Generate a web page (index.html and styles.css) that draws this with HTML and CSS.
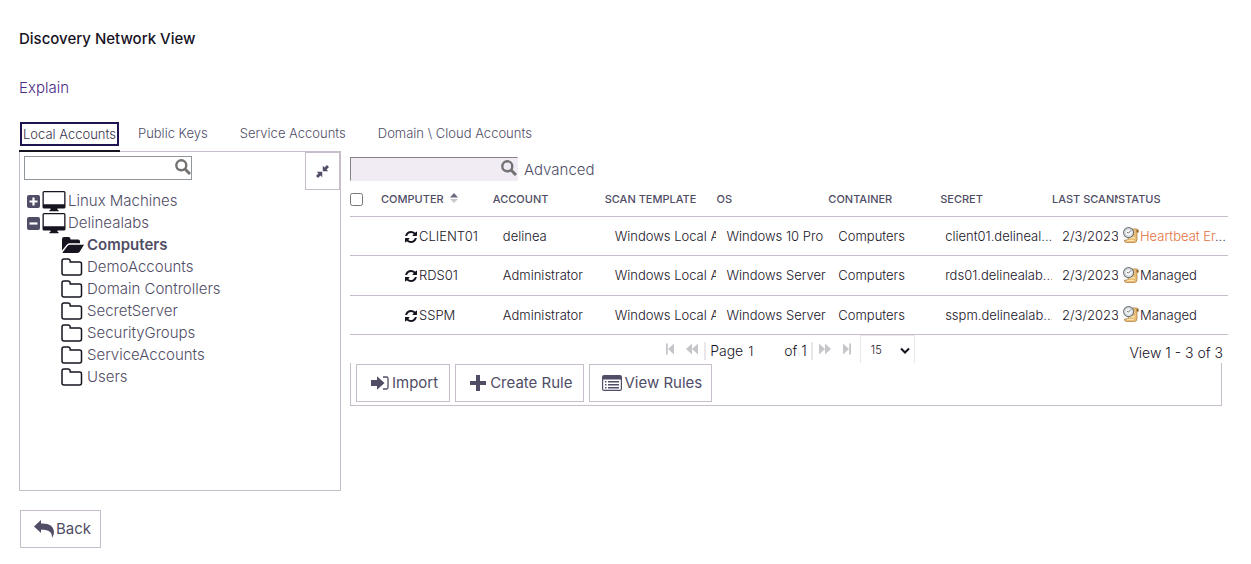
FILE: index.html
```html
<!DOCTYPE html>
<html lang="en">
<head>
<meta charset="utf-8">
<title>Discovery Network View</title>
<link rel="stylesheet" href="styles.css">
</head>
<body>
<svg class="sprite" aria-hidden="true">
  <symbol id="search" viewBox="0 0 16 16"><circle cx="6.3" cy="6.3" r="5" fill="none" stroke="currentColor" stroke-width="2.4"/><path d="M10 10l5 5" stroke="currentColor" stroke-width="3"/></symbol>
  <symbol id="monitor" viewBox="0 0 24 22"><path fill="currentColor" fill-rule="evenodd" d="M2 1h20a1.500 1.500 0 0 1 1.500 1.500v14.500a1.500 1.500 0 0 1-1.500 1.500h-6.500v1.500h1v1.200H7.500V20h1v-1.500H2A1.500 1.500 0 0 1 .5 17V2.500A1.500 1.500 0 0 1 2 1zM1.800 2.300v12h20.400v-12z"/></symbol>
  <symbol id="folder" viewBox="0 0 22 18"><path fill="none" stroke="currentColor" stroke-width="1.500" d="M1 15V3a2 2 0 0 1 2-2h4q2 0 2.200 2v1h9.300a2 2 0 0 1 2 2v9a2 2 0 0 1-2 2H3a2 2 0 0 1-2-2z"/></symbol>
  <symbol id="folder-open" viewBox="0 0 24 18"><path fill="currentColor" d="M1 14.500V3q0-2 2-2h4.500q2 0 2 2v.5h7.500q2 0 2 2v1.700H8.500Q6.800 7.200 5.500 9zM1.500 16.500L6.500 10q1-1.200 2.500-1.200h14L18.500 16q-1 1-2.500 1H3q-1.200 0-1.500-.5z"/></symbol>
  <symbol id="refresh" viewBox="0 0 1536 1536"><path fill="currentColor" d="M1511 928q0 5-1 7-64 268-268 434.500t-478 166.500q-146 0-282.500-55t-243.500-157l-129 129q-19 19-45 19t-45-19-19-45v-448q0-26 19-45t45-19h448q26 0 45 19t19 45-19 45l-137 137q71 66 161 102t187 36q134 0 250-65t186-179q11-17 53-117 8-23 30-23h192q13 0 22.500 9.500t9.500 22.500zm25-800v448q0 26-19 45t-45 19h-448q-26 0-45-19t-19-45 19-45l138-138q-148-137-349-137-134 0-250 65t-186 179q-11 17-53 117-8 23-30 23h-199q-13 0-22.500-9.500t-9.500-22.500v-7q65-268 270-434.500t480-166.500q146 0 284 55.500t245 156.500l130-129q19-19 45-19t45 19 19 45z"/></symbol>
  <symbol id="scroll" viewBox="0 0 16 16"><path fill="#e9bd75" stroke="#a8783a" stroke-width=".7" d="M6 2h7.500q2 0 2 1.800v1.400h-1.500v7.300q0 3-2.500 3H3.200q-2-.2-1.700-2.500H5z"/><path fill="#fbe3ad" d="M6 10h6v1.500H6zM4 13h7v1H4z"/><path fill="#8b5d2a" d="M13.500 3h1.400v2.200h-1.400z"/><circle cx="5.600" cy="5.600" r="5" fill="#f3f6f7" stroke="#707579" stroke-width="1.100"/><circle cx="5.600" cy="5.600" r="3.600" fill="none" stroke="#b8c1c6" stroke-width=".6"/><path d="M8 3.400L5.500 6.100 4 5.300" fill="none" stroke="#555" stroke-width=".8"/></symbol>
  <symbol id="first" viewBox="0 0 10 12"><path fill="currentColor" d="M1 0.500h1.800v11H1zM9 .5v11L3 6z"/></symbol>
  <symbol id="prev" viewBox="0 0 12 12"><path fill="currentColor" d="M6 .5v11L0 6zM12 .5v11L6 6z"/></symbol>
</svg>

<main class="page">
  <h1 class="title">Discovery Network View</h1>
  <a class="explain" href="#">Explain</a>

  <nav class="tabs">
    <a class="tab active" href="#"><span class="focus">Local Accounts</span></a>
    <a class="tab" href="#">Public Keys</a>
    <a class="tab" href="#">Service Accounts</a>
    <a class="tab" href="#">Domain \ Cloud Accounts</a>
  </nav>

  <div class="columns">
    <section class="tree-panel">
      <div class="tree-top">
        <div class="search"><input type="text" aria-label="Search containers"><svg class="lens"><use href="#search"/></svg></div>
        <button class="collapse" type="button" aria-label="Collapse panel"><svg viewBox="0 0 14 14"><path fill="currentColor" d="M7.300 6.700V.9l1.900 1.700L11.800 0 14 2.200l-2.600 2.600 1.700 1.900zM6.700 7.300v5.800l-1.900-1.700L2.200 14 0 11.800l2.600-2.600L.9 7.300z"/></svg></button>
      </div>
      <ul class="tree">
        <li><button class="toggle" type="button" aria-label="Expand"><svg viewBox="0 0 13 13"><path d="M6.500 2.500v8M2.500 6.500h8"/></svg></button><svg class="monitor"><use href="#monitor"/></svg>Linux Machines</li>
        <li><button class="toggle" type="button" aria-label="Collapse"><svg viewBox="0 0 13 13"><path d="M2.500 6.500h8"/></svg></button><svg class="monitor"><use href="#monitor"/></svg>Delinealabs</li>
        <li class="child selected"><svg class="folder open"><use href="#folder-open"/></svg>Computers</li>
        <li class="child"><svg class="folder"><use href="#folder"/></svg>DemoAccounts</li>
        <li class="child"><svg class="folder"><use href="#folder"/></svg>Domain Controllers</li>
        <li class="child"><svg class="folder"><use href="#folder"/></svg>SecretServer</li>
        <li class="child"><svg class="folder"><use href="#folder"/></svg>SecurityGroups</li>
        <li class="child"><svg class="folder"><use href="#folder"/></svg>ServiceAccounts</li>
        <li class="child"><svg class="folder"><use href="#folder"/></svg>Users</li>
      </ul>
    </section>

    <section class="grid">
      <div class="grid-search">
        <div class="search tinted"><input type="text" aria-label="Search accounts"><svg class="lens"><use href="#search"/></svg></div>
        <a class="advanced" href="#">Advanced</a>
      </div>
      <table class="accounts">
        <colgroup><col class="c-check"><col><col><col><col><col><col><col class="c-date"><col class="c-status"></colgroup>
        <thead>
          <tr><th><input type="checkbox" aria-label="Select all"></th><th>COMPUTER<svg class="sort" viewBox="0 0 8 11"><path fill="#6b6880" d="M4 0l4 4.500H0z"/><path fill="#c9c8cf" d="M0 6h8l-4 4z"/></svg></th><th>ACCOUNT</th><th>SCAN TEMPLATE</th><th>OS</th><th>CONTAINER</th><th>SECRET</th><th>LAST SCANN</th><th>STATUS</th></tr>
        </thead>
        <tbody>
          <tr><td></td><td class="host"><svg><use href="#refresh"/></svg>CLIENT01</td><td>delinea</td><td>Windows Local Ac</td><td>Windows 10 Pro</td><td>Computers</td><td class="secret">client01.delineal...</td><td>2/3/2023</td><td class="status"><svg><use href="#scroll"/></svg><span class="error">Heartbeat Er</span>...</td></tr>
          <tr><td></td><td class="host"><svg><use href="#refresh"/></svg>RDS01</td><td>Administrator</td><td>Windows Local Ac</td><td>Windows Server 2</td><td>Computers</td><td class="secret">rds01.delinealab...</td><td>2/3/2023</td><td class="status"><svg><use href="#scroll"/></svg>Managed</td></tr>
          <tr><td></td><td class="host"><svg><use href="#refresh"/></svg>SSPM</td><td>Administrator</td><td>Windows Local Ac</td><td>Windows Server 2</td><td>Computers</td><td class="secret">sspm.delinealab...</td><td>2/3/2023</td><td class="status"><svg><use href="#scroll"/></svg>Managed</td></tr>
        </tbody>
      </table>
      <div class="pager">
        <span></span>
        <div class="pages">
          <button type="button" aria-label="First page"><svg class="narrow"><use href="#first"/></svg></button>
          <button type="button" aria-label="Previous page"><svg><use href="#prev"/></svg></button>
          <label class="page-box">Page <input type="text" value="1"></label>
          <span class="total">of 1</span>
          <button type="button" aria-label="Next page"><svg class="flip"><use href="#prev"/></svg></button>
          <button type="button" aria-label="Last page"><svg class="narrow flip"><use href="#first"/></svg></button>
          <div class="size"><select aria-label="Rows per page"><option>15</option></select><svg viewBox="0 0 10 8"><path d="M1 1.500l4 4 4-4"/></svg></div>
        </div>
        <span class="view">View 1 - 3 of 3</span>
      </div>
      <div class="actions">
        <button class="btn import" type="button"><svg viewBox="0 0 18 14"><path fill="currentColor" d="M0 4h6V.2L13.500 7 6 13.800V10H0z"/><path d="M12 1h3.500q1.500 0 1.500 1.500v9q0 1.500-1.500 1.500H12" fill="none" stroke="currentColor" stroke-width="1.300"/></svg>Import</button>
        <button class="btn create" type="button"><svg viewBox="0 0 16 16"><path d="M8 0v16M0 8h16" stroke="currentColor" stroke-width="4"/></svg>Create Rule</button>
        <button class="btn rules" type="button"><svg viewBox="0 0 20 16"><rect x=".6" y=".6" width="18.800" height="14.800" rx="1.500" fill="none" stroke="currentColor" stroke-width="1.200"/><path fill="currentColor" d="M1 1h18v3.500H1z"/><path d="M3 6.700h1.500M6 6.700h11M3 9.700h1.500M6 9.700h11M3 12.700h1.500M6 12.700h11" stroke="currentColor" stroke-width="1.400"/></svg>View Rules</button>
      </div>
    </section>
  </div>

  <button class="btn back" type="button"><svg viewBox="0 0 20 18"><path fill="currentColor" d="M0 6.500L7 0v3.600c8-.4 12.500 2.400 13 8.400q0 3-2 6c.3-6-3-8.300-11-8.200V13z"/></svg>Back</button>
</main>
</body>
</html>
```
FILE: styles.css
```css
* { box-sizing: border-box; }
body {
  margin: 0;
  background: #fff;
  color: #504d66;
  font: 300 15px/22px Inter, "Open Sans", sans-serif;
}
a { color: inherit; text-decoration: none; }
button, input, select { font: inherit; color: inherit; }
button { background: none; border: 0; padding: 0; }
svg { flex: none; }
.sprite { position: absolute; width: 0; height: 0; }
.page { padding: 28px 23px 16px 19px; }
.title { margin: 0 0 27px; font-size: 15px; line-height: 22px; font-weight: 500; color: #17131f; }
.explain { display: block; width: max-content; color: #4b2a86; }

.tabs { display: flex; gap: 18px; height: 53px; align-items: flex-end; font-size: 13px; }
.tab { height: 32px; padding-top: 2px; }
.tab + .tab + .tab { margin-left: 14px; }
.tab.active { padding: 2px 1px 0; border-bottom: 2px solid #17131f; z-index: 1; }
.focus { display: block; padding: 0 1px; border: 2px solid #1f1450; line-height: 20px; color: #37334a; }

.columns { display: flex; gap: 9px; align-items: flex-start; margin-top: -1px; }
.tree-panel { width: 322px; flex: none; min-height: 340px; border: 1px solid #c8bdcb; }
.tree-top { display: flex; justify-content: space-between; align-items: flex-start; padding-left: 4px; }
.search { position: relative; width: 168px; height: 24px; }
.tree-top .search { margin-top: 4px; }
.search input { width: 100%; height: 100%; border: 1px solid #8f979d; padding: 0 22px 0 4px; background: #fff; display: block; }
.tinted input { background: #f1ebf3; border-color: #858187 transparent transparent #858187; }
.lens { position: absolute; right: 1px; top: 3px; width: 16px; height: 16px; color: #727272; }
.collapse { width: 35px; height: 38px; border: 1px solid #c8bdcb; display: grid; place-items: center; }
.collapse svg { width: 13px; height: 13px; }

.tree { list-style: none; margin: 0; padding: 0 0 0 7px; }
.tree li { display: flex; align-items: center; height: 22px; }
.toggle { width: 13px; height: 13px; border-radius: 2px; background: #504d66; margin-right: 2px; display: flex; }
.toggle path { stroke: #fff; stroke-width: 2.2; }
.monitor { width: 24px; height: 22px; color: #17131f; margin-right: 2px; }
.tree .child { padding-left: 34px; }
.folder { width: 22px; height: 18px; margin-right: 4px; color: #17131f; }
.folder.open { width: 24px; margin-right: 2px; }
.selected { font-weight: 600; }

.grid { flex: 1; min-width: 0; }
.grid-search { display: flex; gap: 6px; padding-top: 6px; }
.advanced { padding-top: 2px; }
.accounts { width: 100%; table-layout: fixed; border-collapse: collapse; font-size: 13px; color: #17131f; }
.c-check { width: 31px; }
.c-date { width: 66px; }
.c-status { width: 110px; }
.accounts th, .accounts td { padding: 0; height: 39px; text-align: left; white-space: nowrap; overflow: hidden; border-bottom: 1px solid #c8bdcb; }
.accounts th { height: 35px; padding-top: 2px; font-size: 11px; font-weight: 500; color: #504d66; }
.accounts th input { width: 13px; height: 13px; margin: 0; display: block; }
.accounts td { padding-left: 10px; }
.accounts tr:nth-child(2) td { height: 40px; }
.accounts svg { vertical-align: middle; }
.accounts .host { padding-left: 24px; }
.host svg { width: 12px; height: 12px; margin-right: 2px; }
.accounts .sort { width: 8px; height: 11px; margin-left: 6px; vertical-align: -1px; }
.accounts .secret { padding-left: 5px; }
.accounts .status { padding-left: 5px; }
.status svg { width: 16px; height: 16px; margin: -3px 1px 0 0; }
.error { color: #e4703c; }

.pager { display: grid; grid-template-columns: 1fr auto 1fr; height: 28px; font-size: 14px; color: #17131f; }
.pages { display: flex; align-items: center; gap: 11px; padding-left: 2px; }
.pages button { color: #c6c5c9; display: flex; }
.pages button svg { width: 12px; height: 12px; }
.pages button .narrow { width: 10px; }
.flip { transform: scaleX(-1); }
.page-box { border-left: 2px solid #e9e7ea; padding-left: 4px; margin-left: -5px; line-height: 18px; display: flex; gap: 5px; }
.page-box input { width: 25px; height: 18px; border: 0; padding: 0; font-size: 13px; }
.total { border-right: 2px solid #e9e7ea; padding-right: 4px; line-height: 18px; margin-right: -5px; }
.page-box, .total { margin-top: 3px; }
.size { position: relative; width: 55px; height: 28px; margin-left: -3px; }
.size select { appearance: none; width: 100%; height: 100%; border: 1px solid #e9e7ea; border-bottom: 0; background: #fff; padding-left: 10px; font-size: 11px; }
.size svg { position: absolute; right: 5px; top: 12px; width: 10px; height: 8px; fill: none; stroke: #17131f; stroke-width: 2; pointer-events: none; }
.view { text-align: right; padding: 7px 5px 0 0; }

.actions { display: flex; gap: 5px; margin-right: 6px; height: 43px; padding: 1px 0 0 5px; border: 1px solid #c8bdcb; border-top: 0; }
.btn { height: 38px; border: 1px solid #c8bdcb; display: flex; align-items: center; padding: 0 11px 0 14px; font-weight: 400; }
.import svg { width: 18px; height: 14px; margin-right: 3px; }
.create svg { width: 16px; height: 16px; margin-right: 4px; }
.rules svg { width: 20px; height: 16px; margin-right: 2px; }
.rules { padding: 0 9px 0 12px; }
.back { margin: 19px 0 0 1px; padding-left: 13px; padding-right: 9px; }
.back svg { width: 20px; height: 18px; margin-right: 2px; }
```
